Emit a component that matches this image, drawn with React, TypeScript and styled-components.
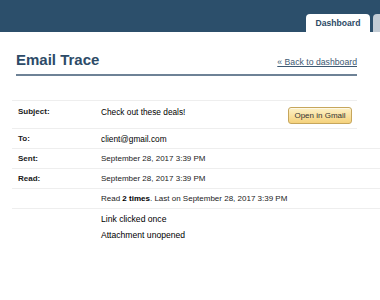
import React from "react";
import styled, { createGlobalStyle } from "styled-components";

const GlobalStyle = createGlobalStyle`
  body {
    margin: 0;
    background: #ffffff;
    font-family: "Liberation Sans", Arial, Helvetica, sans-serif;
  }
`;

const TopBar = styled.div`
  height: 32px;
  background-color: #2c4f6b;
  display: flex;
  justify-content: flex-end;
  align-items: flex-end;
  gap: 3px;
  overflow: hidden;
`;

const Tab = styled.div<{ $active?: boolean }>`
  height: 18px;
  width: ${(p) => (p.$active ? "64px" : "60px")};
  margin-right: ${(p) => (p.$active ? "0" : "-53px")};
  flex-shrink: 0;
  border-radius: 4px 4px 0 0;
  background-color: ${(p) => (p.$active ? "#ffffff" : "#c3ccd5")};
  color: #2c4a66;
  font-size: 8.6px;
  font-weight: bold;
  line-height: 18px;
  text-align: center;
`;

const Main = styled.div`
  padding: 0 23px 0 16px;
`;

const TitleRow = styled.div`
  display: flex;
  justify-content: space-between;
  align-items: baseline;
  margin-top: 19px;
  padding-bottom: 5px;
  border-bottom: 2px solid #6e8296;
`;

const Title = styled.h1`
  margin: 0;
  font-size: 15px;
  line-height: 18px;
  font-weight: bold;
  color: #2d4b68;
`;

const BackLink = styled.a`
  font-size: 8.7px;
  color: #3d5872;
  text-decoration: underline;
  cursor: pointer;
`;

const Table = styled.div`
  margin: 24px 0 0 -4px;
`;

const Row = styled.div<{ $bleed?: boolean; $tall?: boolean }>`
  display: grid;
  grid-template-columns: 83px 1fr auto;
  align-items: start;
  padding: ${(p) => (p.$tall ? "6px 5px 4px 6px" : "5px 5px 4px 6px")};
  margin-right: ${(p) => (p.$bleed ? "-23px" : "0")};
  border-top: 1px solid #eeeeee;
`;

const Label = styled.div`
  font-size: 8px;
  line-height: 10px;
  font-weight: bold;
  color: #1a1a1a;
`;

const Value = styled.div<{ $strong?: boolean }>`
  font-size: ${(p) => (p.$strong ? "8.3px" : "8px")};
  line-height: 10px;
  color: ${(p) => (p.$strong ? "#000000" : "#222222")};

  b {
    color: #000000;
  }
`;

const Notes = styled.div`
  display: flex;
  flex-direction: column;
  gap: 6px;
`;

const Note = styled.div`
  font-size: 8.6px;
  line-height: 10px;
  color: #000000;
`;

const GmailButton = styled.button`
  width: 64px;
  height: 17px;
  padding: 0;
  border: 1px solid #c6a65c;
  border-radius: 3px;
  background: linear-gradient(#fdf1c8, #f5d27c);
  box-shadow: inset 0 1px 0 rgba(255, 255, 255, 0.6);
  font-family: inherit;
  font-size: 8px;
  color: #333333;
  cursor: pointer;
`;

const App: React.FC = () => {
  return (
    <>
      <GlobalStyle />
      <TopBar>
        <Tab $active>Dashboard</Tab>
        <Tab />
      </TopBar>
      <Main>
        <TitleRow>
          <Title>Email Trace</Title>
          <BackLink>« Back to dashboard</BackLink>
        </TitleRow>
        <Table>
          <Row $tall>
            <Label>Subject:</Label>
            <Value $strong>Check out these deals!</Value>
            <GmailButton>Open in Gmail</GmailButton>
          </Row>
          <Row>
            <Label>To:</Label>
            <Value $strong>client@gmail.com</Value>
          </Row>
          <Row $bleed>
            <Label>Sent:</Label>
            <Value>September 28, 2017 3:39 PM</Value>
          </Row>
          <Row $bleed>
            <Label>Read:</Label>
            <Value>September 28, 2017 3:39 PM</Value>
          </Row>
          <Row $bleed>
            <Label />
            <Value>
              Read <b>2 times</b>. Last on September 28, 2017 3:39 PM
            </Value>
          </Row>
          <Row $bleed>
            <Label />
            <Notes>
              <Note>Link clicked once</Note>
              <Note>Attachment unopened</Note>
            </Notes>
          </Row>
        </Table>
      </Main>
    </>
  );
};

export default App;
